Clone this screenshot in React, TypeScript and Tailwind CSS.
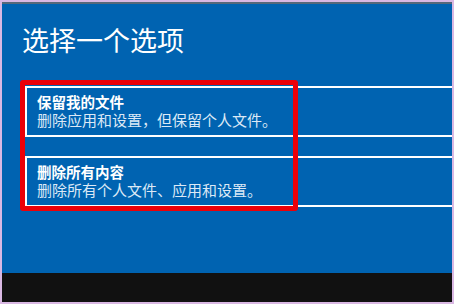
import React from "react";

const font = { fontFamily: '"Noto Sans CJK SC", "Noto Sans", sans-serif' };

function Option({ title, desc }: { title: string; desc: string }) {
  return (
    <div className="ml-[23px] h-[51px] border-2 border-r-0 border-white pl-[10px] pt-[6px]">
      <div className="text-[14.5px] leading-[16px] font-bold text-white">{title}</div>
      <div className="mt-[1px] text-[15px] leading-[17px] text-[#dce9f6]">{desc}</div>
    </div>
  );
}

export default function App() {
  return (
    <div className="w-[454px] h-[304px] bg-[#d9b8e3] p-[2px]" style={font}>
      <div className="flex h-full flex-col">
        <div className="h-[2px] bg-[#56687a]" />
        <div className="relative flex-1 bg-[#0063b1]">
          <div className="pl-[20px] pt-[18px] text-[27px] leading-[36px] font-normal text-white">
            选择一个选项
          </div>
          <div className="mt-[28px] flex flex-col gap-[19px]">
            <Option title="保留我的文件" desc="删除应用和设置，但保留个人文件。" />
            <Option title="删除所有内容" desc="删除所有个人文件、应用和设置。" />
          </div>
          <div className="absolute left-[17.5px] top-[76px] h-[131px] w-[278px] rounded-[3px] border-[5px] border-[#ec0008]" />
        </div>
        <div className="h-[29px] bg-[#111111]" />
      </div>
    </div>
  );
}
